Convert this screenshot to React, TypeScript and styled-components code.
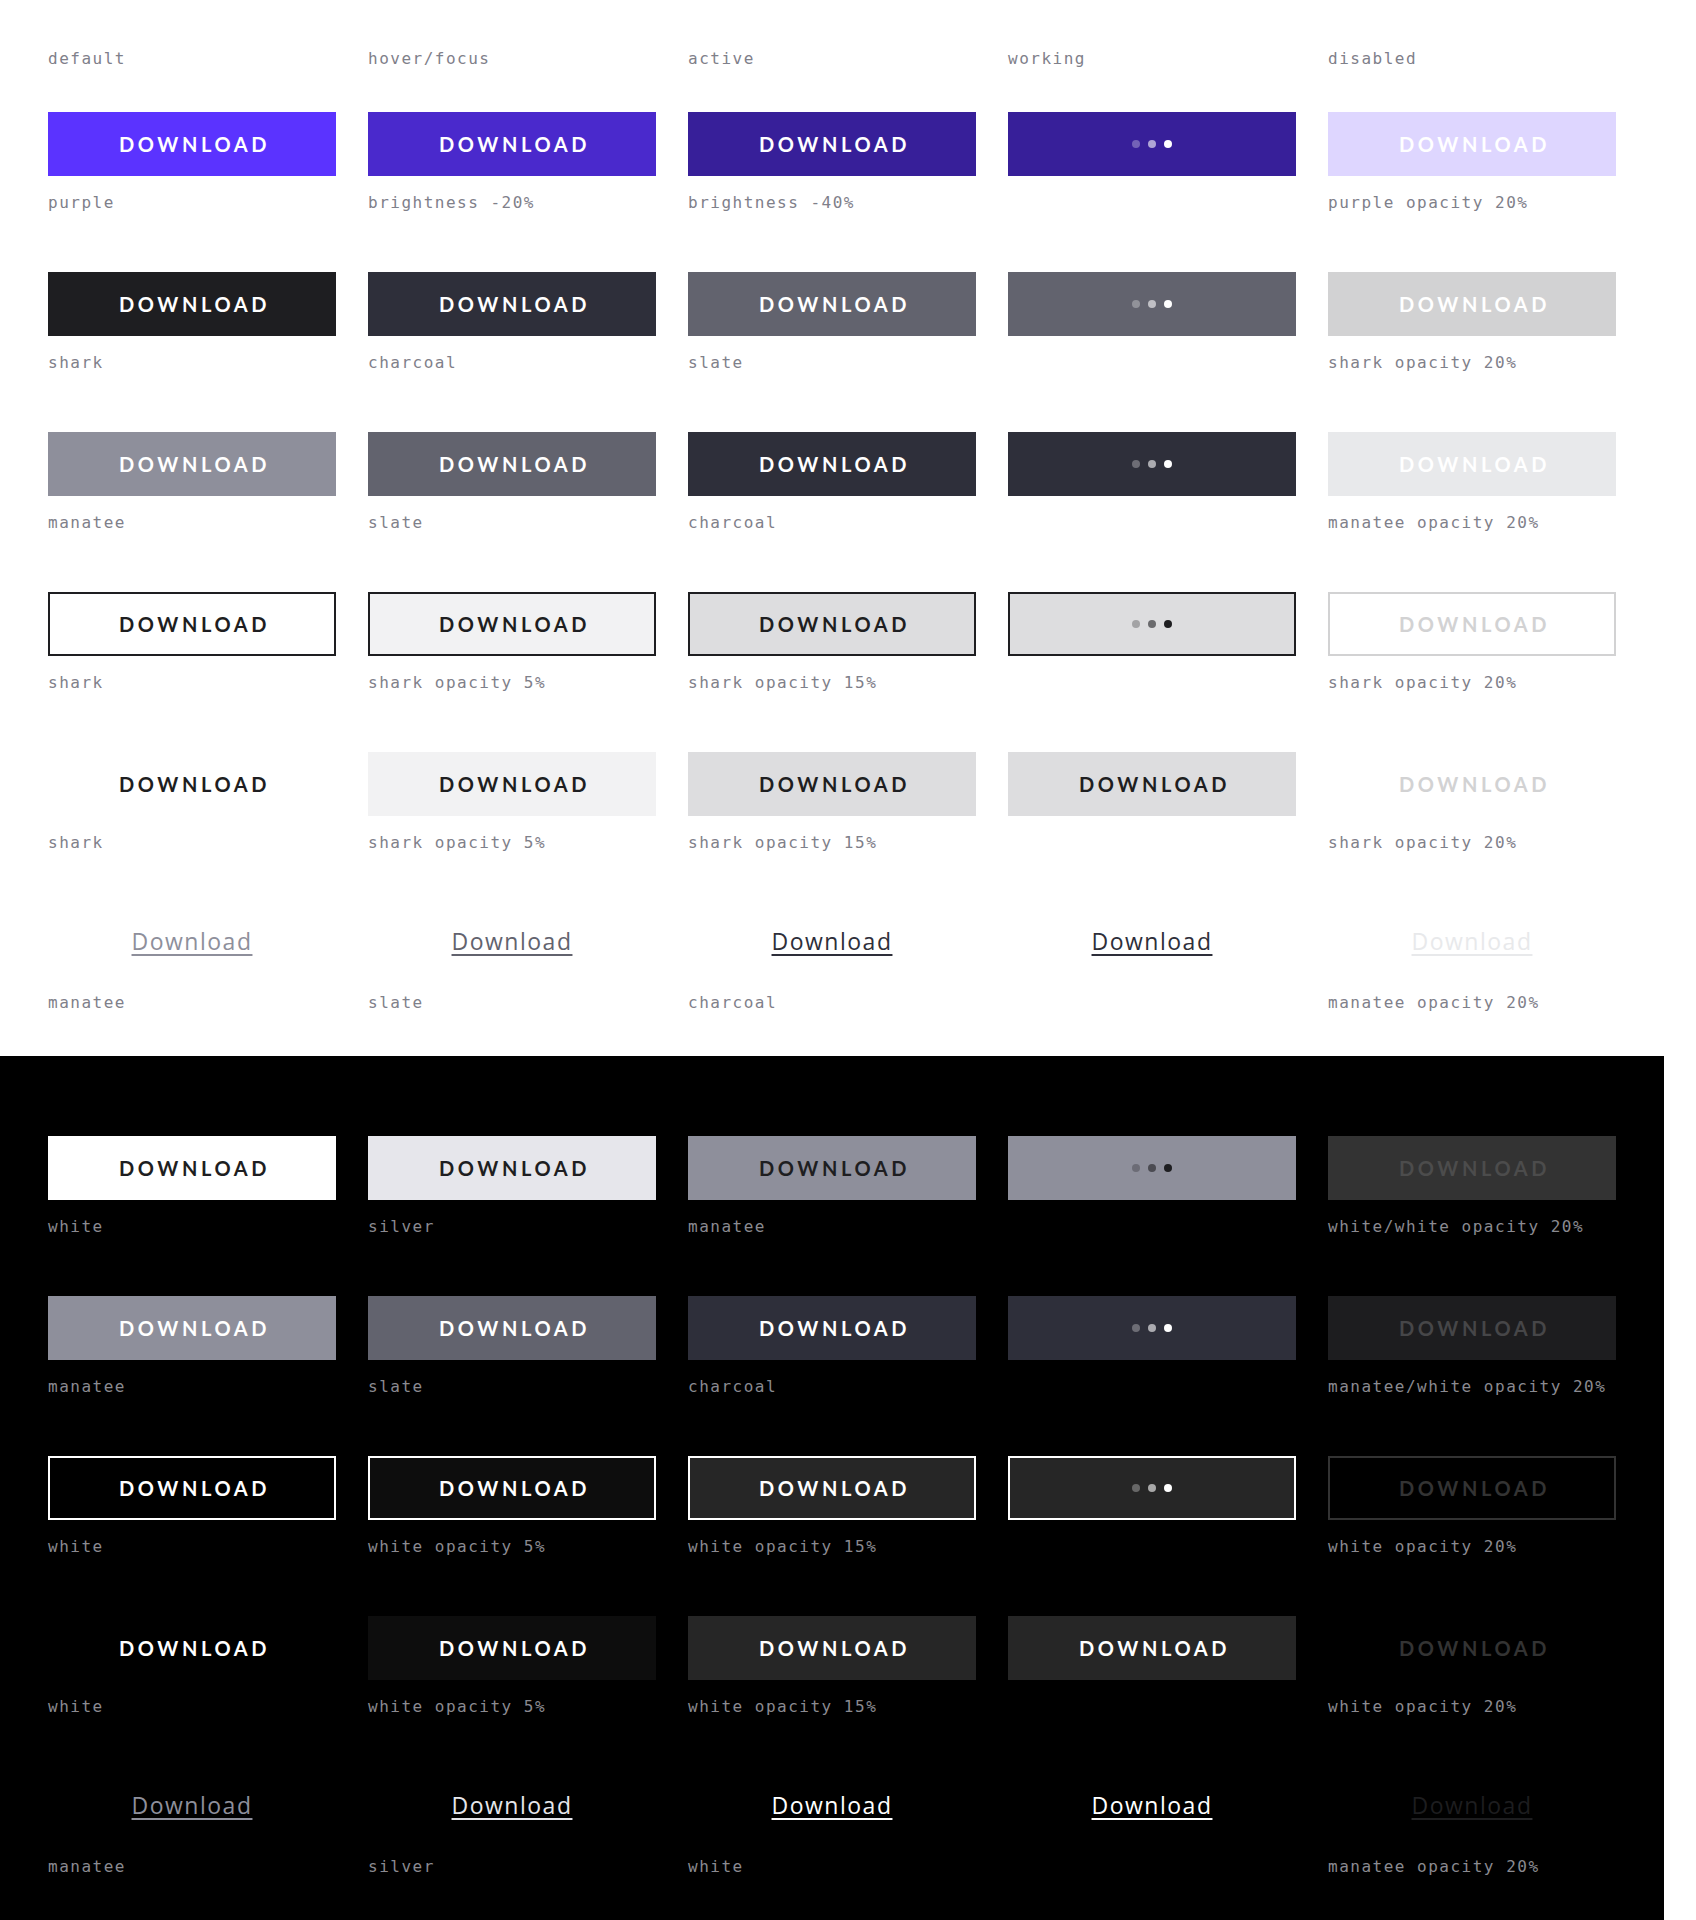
import React from 'react';
import styled, { createGlobalStyle } from 'styled-components';

const shark = '#1e1e21';
const charcoal = '#2e2f3a';
const slate = '#62636e';
const manatee = '#8e8f9b';
const silver = '#e6e6eb';
const white = '#ffffff';
const purple = '#5b33ff';

type Kind = 'solid' | 'outline' | 'ghost' | 'link';

type Cell = {
  kind: Kind;
  bg?: string;
  fg: string;
  border?: string;
  working?: boolean;
  label?: string;
};

const states = ['default', 'hover/focus', 'active', 'working', 'disabled'];

const lightRows: Cell[][] = [
  [
    { kind: 'solid', bg: purple, fg: white, label: 'purple' },
    { kind: 'solid', bg: '#4a29cc', fg: white, label: 'brightness -20%' },
    { kind: 'solid', bg: '#371f99', fg: white, label: 'brightness -40%' },
    { kind: 'solid', bg: '#371f99', fg: white, working: true },
    { kind: 'solid', bg: '#ded6ff', fg: white, label: 'purple opacity 20%' },
  ],
  [
    { kind: 'solid', bg: shark, fg: white, label: 'shark' },
    { kind: 'solid', bg: charcoal, fg: white, label: 'charcoal' },
    { kind: 'solid', bg: slate, fg: white, label: 'slate' },
    { kind: 'solid', bg: slate, fg: white, working: true },
    { kind: 'solid', bg: '#d2d2d3', fg: white, label: 'shark opacity 20%' },
  ],
  [
    { kind: 'solid', bg: manatee, fg: white, label: 'manatee' },
    { kind: 'solid', bg: slate, fg: white, label: 'slate' },
    { kind: 'solid', bg: charcoal, fg: white, label: 'charcoal' },
    { kind: 'solid', bg: charcoal, fg: white, working: true },
    { kind: 'solid', bg: '#e8e9eb', fg: white, label: 'manatee opacity 20%' },
  ],
  [
    { kind: 'outline', bg: white, fg: shark, border: shark, label: 'shark' },
    { kind: 'outline', bg: '#f2f2f3', fg: shark, border: shark, label: 'shark opacity 5%' },
    { kind: 'outline', bg: '#dddddf', fg: shark, border: shark, label: 'shark opacity 15%' },
    { kind: 'outline', bg: '#dddddf', fg: shark, border: shark, working: true },
    { kind: 'outline', bg: white, fg: '#d2d2d3', border: '#d2d2d3', label: 'shark opacity 20%' },
  ],
  [
    { kind: 'ghost', fg: shark, label: 'shark' },
    { kind: 'ghost', bg: '#f2f2f3', fg: shark, label: 'shark opacity 5%' },
    { kind: 'ghost', bg: '#dddddf', fg: shark, label: 'shark opacity 15%' },
    { kind: 'ghost', bg: '#dddddf', fg: shark },
    { kind: 'ghost', fg: '#d2d2d3', label: 'shark opacity 20%' },
  ],
  [
    { kind: 'link', fg: manatee, label: 'manatee' },
    { kind: 'link', fg: slate, label: 'slate' },
    { kind: 'link', fg: charcoal, label: 'charcoal' },
    { kind: 'link', fg: charcoal },
    { kind: 'link', fg: '#e8e9eb', label: 'manatee opacity 20%' },
  ],
];

const darkRows: Cell[][] = [
  [
    { kind: 'solid', bg: white, fg: shark, label: 'white' },
    { kind: 'solid', bg: silver, fg: shark, label: 'silver' },
    { kind: 'solid', bg: manatee, fg: shark, label: 'manatee' },
    { kind: 'solid', bg: manatee, fg: shark, working: true },
    { kind: 'solid', bg: '#333333', fg: '#4c4c4c', label: 'white/white opacity 20%' },
  ],
  [
    { kind: 'solid', bg: manatee, fg: white, label: 'manatee' },
    { kind: 'solid', bg: slate, fg: white, label: 'slate' },
    { kind: 'solid', bg: charcoal, fg: white, label: 'charcoal' },
    { kind: 'solid', bg: charcoal, fg: white, working: true },
    { kind: 'solid', bg: '#1d1d1f', fg: '#464648', label: 'manatee/white opacity 20%' },
  ],
  [
    { kind: 'outline', bg: '#000000', fg: white, border: white, label: 'white' },
    { kind: 'outline', bg: '#0d0d0d', fg: white, border: white, label: 'white opacity 5%' },
    { kind: 'outline', bg: '#262626', fg: white, border: white, label: 'white opacity 15%' },
    { kind: 'outline', bg: '#262626', fg: white, border: white, working: true },
    { kind: 'outline', bg: '#000000', fg: '#333333', border: '#333333', label: 'white opacity 20%' },
  ],
  [
    { kind: 'ghost', fg: white, label: 'white' },
    { kind: 'ghost', bg: '#0d0d0d', fg: white, label: 'white opacity 5%' },
    { kind: 'ghost', bg: '#262626', fg: white, label: 'white opacity 15%' },
    { kind: 'ghost', bg: '#262626', fg: white },
    { kind: 'ghost', fg: '#333333', label: 'white opacity 20%' },
  ],
  [
    { kind: 'link', fg: manatee, label: 'manatee' },
    { kind: 'link', fg: silver, label: 'silver' },
    { kind: 'link', fg: white, label: 'white' },
    { kind: 'link', fg: white },
    { kind: 'link', fg: '#1d1d1f', label: 'manatee opacity 20%' },
  ],
];

const Dots = ({ color }: { color: string }) => (
  <DotRow>
    <Dot $color={color} $alpha={0.3} />
    <Dot $color={color} $alpha={0.6} />
    <Dot $color={color} $alpha={1} />
  </DotRow>
);

const ButtonCell = ({ cell, dark }: { cell: Cell; dark?: boolean }) => (
  <CellBox>
    {cell.kind === 'link' ? (
      <LinkArea>
        <LinkText $color={cell.fg}>Download</LinkText>
      </LinkArea>
    ) : (
      <Btn $bg={cell.bg} $fg={cell.fg} $border={cell.kind === 'outline' ? cell.border : undefined}>
        {cell.working ? <Dots color={cell.fg} /> : <BtnText>DOWNLOAD</BtnText>}
      </Btn>
    )}
    <Caption $dark={dark}>{cell.label}</Caption>
  </CellBox>
);

const App = () => (
  <>
    <Global />
    <Page>
      <LightSection>
        <HeadRow>
          {states.map((s) => (
            <HeadCaption key={s}>{s}</HeadCaption>
          ))}
        </HeadRow>
        <Grid>
          {lightRows.map((row, r) => row.map((cell, c) => <ButtonCell key={`l${r}-${c}`} cell={cell} />))}
        </Grid>
      </LightSection>
      <DarkSection>
        <Grid>
          {darkRows.map((row, r) => row.map((cell, c) => <ButtonCell key={`d${r}-${c}`} cell={cell} dark />))}
        </Grid>
      </DarkSection>
    </Page>
  </>
);

export default App;

const Global = createGlobalStyle`
  html, body {
    margin: 0;
    padding: 0;
    background: #ffffff;
  }
  * {
    box-sizing: border-box;
  }
`;

const Page = styled.div`
  width: 1664px;
`;

const LightSection = styled.section`
  background: #ffffff;
  padding: 49px 48px 44px;
`;

const DarkSection = styled.section`
  background: #000000;
  padding: 80px 48px 44px;
`;

const HeadRow = styled.div`
  display: grid;
  grid-template-columns: repeat(5, 288px);
  column-gap: 32px;
  margin-bottom: 43px;
`;

const Grid = styled.div`
  display: grid;
  grid-template-columns: repeat(5, 288px);
  column-gap: 32px;
  row-gap: 60px;
`;

const CellBox = styled.div`
  display: flex;
  flex-direction: column;
`;

const Btn = styled.div<{ $bg?: string; $fg: string; $border?: string }>`
  height: 64px;
  display: flex;
  align-items: center;
  justify-content: center;
  background: ${({ $bg }) => $bg || 'transparent'};
  color: ${({ $fg }) => $fg};
  border: ${({ $border }) => ($border ? `2px solid ${$border}` : 'none')};
`;

const BtnText = styled.span`
  font-family: Lato, 'Open Sans', sans-serif;
  font-weight: 700;
  font-size: 20px;
  letter-spacing: 3.6px;
  padding-left: 5px;
  line-height: 1;
`;

const DotRow = styled.div`
  display: flex;
  gap: 8px;
`;

const Dot = styled.span<{ $color: string; $alpha: number }>`
  width: 8px;
  height: 8px;
  border-radius: 50%;
  background: ${({ $color }) => $color};
  opacity: ${({ $alpha }) => $alpha};
`;

const LinkArea = styled.div`
  height: 64px;
  padding-bottom: 6px;
  display: flex;
  align-items: center;
  justify-content: center;
`;

const LinkText = styled.a<{ $color: string }>`
  font-family: 'Open Sans', Lato, sans-serif;
  font-size: 23px;
  letter-spacing: 1.5px;
  color: ${({ $color }) => $color};
  text-decoration: underline;
  text-decoration-thickness: 2px;
  text-underline-offset: 4px;
  cursor: pointer;
`;

const Caption = styled.div<{ $dark?: boolean }>`
  margin-top: 17px;
  height: 19px;
  line-height: 20px;
  font-family: 'DejaVu Sans Mono', 'Liberation Mono', monospace;
  font-size: 16px;
  letter-spacing: 1.5px;
  white-space: nowrap;
  color: ${({ $dark }) => ($dark ? '#8a8a90' : '#7f808a')};
`;

const HeadCaption = styled(Caption)`
  margin-top: 0;
  height: 20px;
`;
